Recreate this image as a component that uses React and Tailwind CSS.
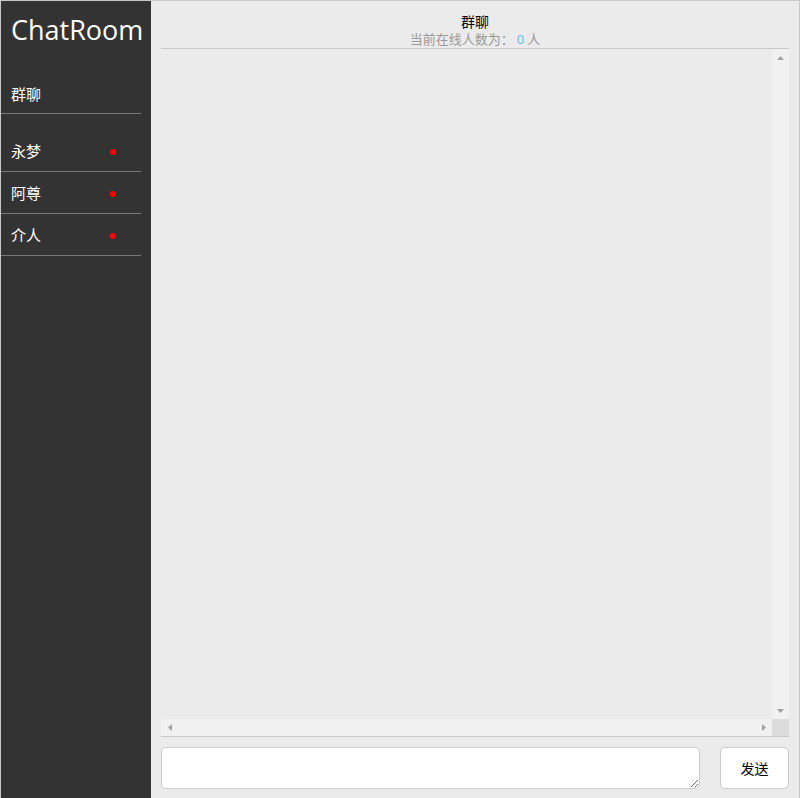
function Tri({ dir }) {
  const pts = {
    up: "0,4 3.5,0 7,4",
    down: "0,0 7,0 3.5,4",
    left: "4,0 4,7 0,3.5",
    right: "0,0 0,7 4,3.5",
  }[dir];
  const v = dir === "up" || dir === "down";
  return (
    <div className="w-[17px] h-[17px] flex items-center justify-center shrink-0">
      <svg width={v ? 7 : 4} height={v ? 4 : 7} viewBox={v ? "0 0 7 4" : "0 0 4 7"}>
        <polygon points={pts} fill="#a3a3a3" />
      </svg>
    </div>
  );
}

export default function App() {
  const users = ["永梦", "阿尊", "介人"];
  return (
    <div className="w-[800px] h-[800px] border border-[#c8c8c8] flex overflow-hidden" style={{ fontFamily: '"Noto Sans", "Noto Sans CJK SC", sans-serif' }}>
      <div className="w-[150px] shrink-0 bg-[#333333] text-white flex flex-col">
        <div className="h-[58px] pl-[10px] pt-[9px] text-[27px] leading-[40px]" style={{ fontFamily: '"Open Sans", "Noto Sans", sans-serif' }}>ChatRoom</div>
        <div className="w-[140px] h-[55px] pl-[10px] pt-[24px] text-[15px] leading-[22px] border-b border-[#777777]">群聊</div>
        <div className="h-[16px]" />
        {users.map((u) => (
          <div key={u} className="w-[140px] h-[42px] pl-[10px] flex items-center border-b border-[#777777]">
            <span className="text-[15px] leading-[22px] pt-[1px]">{u}</span>
            <span className="ml-auto mr-[25px] mt-[2px] w-[6px] h-[6px] rounded-full bg-[#ff0000]" />
          </div>
        ))}
      </div>
      <div className="flex-1 bg-[#ebebeb] px-[10px] flex flex-col">
        <div className="h-[48px] border-b border-[#c8c8c8] flex flex-col items-center pt-[11px]">
          <div className="text-[14px] leading-[19px] text-black">群聊</div>
          <div className="text-[13px] leading-[16px] text-[#999999]">
            当前在线人数为：<span className="text-[#66bbee] px-[3px]">0</span>人
          </div>
        </div>
        <div className="h-[688px] border-b border-[#c8c8c8] flex flex-col">
          <div className="flex-1 flex">
            <div className="flex-1" />
            <div className="w-[17px] bg-[#f1f1f1] flex flex-col justify-between">
              <Tri dir="up" />
              <Tri dir="down" />
            </div>
          </div>
          <div className="h-[17px] flex">
            <div className="flex-1 bg-[#f1f1f1] flex justify-between">
              <Tri dir="left" />
              <Tri dir="right" />
            </div>
            <div className="w-[17px] bg-[#dcdcdc]" />
          </div>
        </div>
        <div className="flex pt-[10px]">
          <textarea className="w-[539px] h-[42px] bg-white border border-[#cccccc] rounded-[5px] resize" />
          <button className="ml-auto w-[69px] h-[42px] bg-white border border-[#cccccc] rounded-[5px] text-[14px] text-black" style={{ fontFamily: '"Noto Sans CJK SC", sans-serif' }}>发送</button>
        </div>
      </div>
    </div>
  );
}
